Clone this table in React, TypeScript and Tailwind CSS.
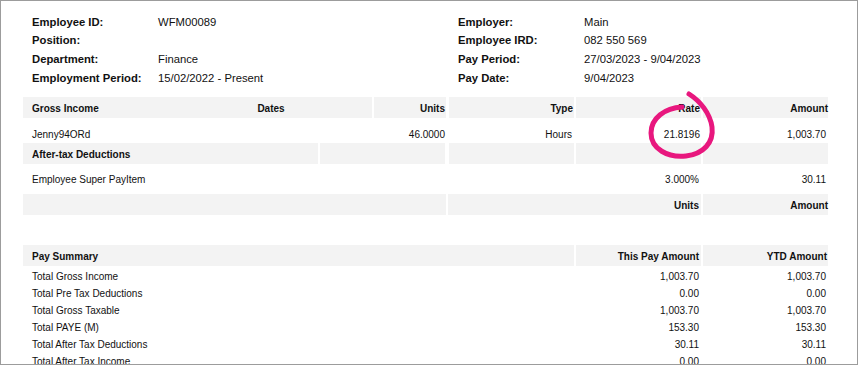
import React from "react";

const HEAD = "bg-[#f3f3f3] flex items-center font-bold pt-[3px]";

const info: [string, string, string, string][] = [
  ["Employee ID:", "WFM00089", "Employer:", "Main"],
  ["Position:", "", "Employee IRD:", "082 550 569"],
  ["Department:", "Finance", "Pay Period:", "27/03/2023 - 9/04/2023"],
  ["Employment Period:", "15/02/2022 - Present", "Pay Date:", "9/04/2023"],
];

const summary: [string, string, string][] = [
  ["Total Gross Income", "1,003.70", "1,003.70"],
  ["Total Pre Tax Deductions", "0.00", "0.00"],
  ["Total Gross Taxable", "1,003.70", "1,003.70"],
  ["Total PAYE (M)", "153.30", "153.30"],
  ["Total After Tax Deductions", "30.11", "30.11"],
  ["Total After Tax Income", "0.00", "0.00"],
];

export default function App() {
  return (
    <div className="relative h-[365px] w-[858px] overflow-hidden border border-[#9c9c9c] bg-white pl-[22px] pr-[28px] pt-[11.2px] font-['Liberation_Sans',Arial,sans-serif] text-[#111]">
      {/* header details */}
      <div className="pl-[9px] text-[11.28px]">
        {info.map(([l1, v1, l2, v2]) => (
          <div key={l1} className="flex h-[18.67px] items-center pt-px">
            <div className="w-[126px] font-bold">{l1}</div>
            <div className="w-[300px]">{v1}</div>
            <div className="w-[126px] font-bold">{l2}</div>
            <div>{v2}</div>
          </div>
        ))}
      </div>

      <div className="mt-[10.1px] text-[10px] leading-[12px]">
        {/* gross income */}
        <div className="flex h-[21px]">
          <div className={`${HEAD} w-[349px]`}>
            <div className="w-[147px] pl-[9px]">Gross Income</div>
            <div className="flex-1 text-center">Dates</div>
          </div>
          <div className={`${HEAD} ml-[2px] w-[72px] justify-end pr-px`}>Units</div>
          <div className={`${HEAD} ml-[3px] w-[125px] justify-end pr-px`}>Type</div>
          <div className={`${HEAD} ml-[2px] w-[125px] justify-end pr-px`}>Rate</div>
          <div className={`${HEAD} ml-[2px] w-[125px] justify-end pr-0`}>Amount</div>
        </div>
        <div className="flex h-[25px] pt-[11px]">
          <div className="w-[349px] pl-[9px]">Jenny94ORd</div>
          <div className="ml-[2px] w-[72px] pr-px text-right">46.0000</div>
          <div className="ml-[3px] w-[125px] pr-[2px] text-right">Hours</div>
          <div className="ml-[2px] w-[125px] pr-px text-right">21.8196</div>
          <div className="ml-[2px] w-[125px] pr-[2px] text-right">1,003.70</div>
        </div>

        {/* after-tax */}
        <div className="flex h-[21px]">
          <div className={`${HEAD} w-[295px] pl-[9px]`}>After-tax Deductions</div>
          <div className={`${HEAD} ml-[2px] w-[125px]`} />
          <div className={`${HEAD} ml-[4px] w-[125px]`} />
          <div className={`${HEAD} ml-[2px] w-[125px]`} />
          <div className={`${HEAD} ml-[2px] w-[125px]`} />
        </div>
        <div className="flex h-[30px] pt-[10px]">
          <div className="w-[551px] pl-[9px]">Employee Super PayItem</div>
          <div className="ml-[2px] w-[125px] pr-[2px] text-right">3.000%</div>
          <div className="ml-[2px] w-[125px] pr-[2px] text-right">30.11</div>
        </div>
        <div className="flex h-[21px]">
          <div className={`${HEAD} w-[423px]`} />
          <div className={`${HEAD} ml-[2px] w-[253px] justify-end pr-[2px]`}>Units</div>
          <div className={`${HEAD} ml-[2px] w-[125px] justify-end`}>Amount</div>
        </div>

        {/* pay summary */}
        <div className="mt-[30px] flex h-[21px]">
          <div className={`${HEAD} w-[551px] pl-[9px]`}>Pay Summary</div>
          <div className={`${HEAD} ml-[2px] w-[125px] justify-end pr-[2px]`}>This Pay Amount</div>
          <div className={`${HEAD} ml-[2px] w-[125px] justify-end pr-px`}>YTD Amount</div>
        </div>
        {summary.map(([label, pay, ytd]) => (
          <div key={label} className="flex h-[17px] items-center pt-[5px]">
            <div className="w-[551px] pl-[9px]">{label}</div>
            <div className="ml-[2px] w-[125px] pr-[2px] text-right">{pay}</div>
            <div className="ml-[2px] w-[125px] pr-[2px] text-right">{ytd}</div>
          </div>
        ))}
      </div>

      {/* hand-drawn highlight */}
      <svg
        className="pointer-events-none absolute -left-px -top-px h-[365px] w-[858px]"
        viewBox="0 0 858 365"
      >
        <path
          d="M682 107 C665 108 651 118 651 133 C651 149 668 158 686 156 C703 154 714 143 712 127 C710 113 700 101 689 94"
          fill="none"
          stroke="#e8177e"
          strokeWidth="5"
          strokeLinecap="round"
        />
      </svg>
    </div>
  );
}
